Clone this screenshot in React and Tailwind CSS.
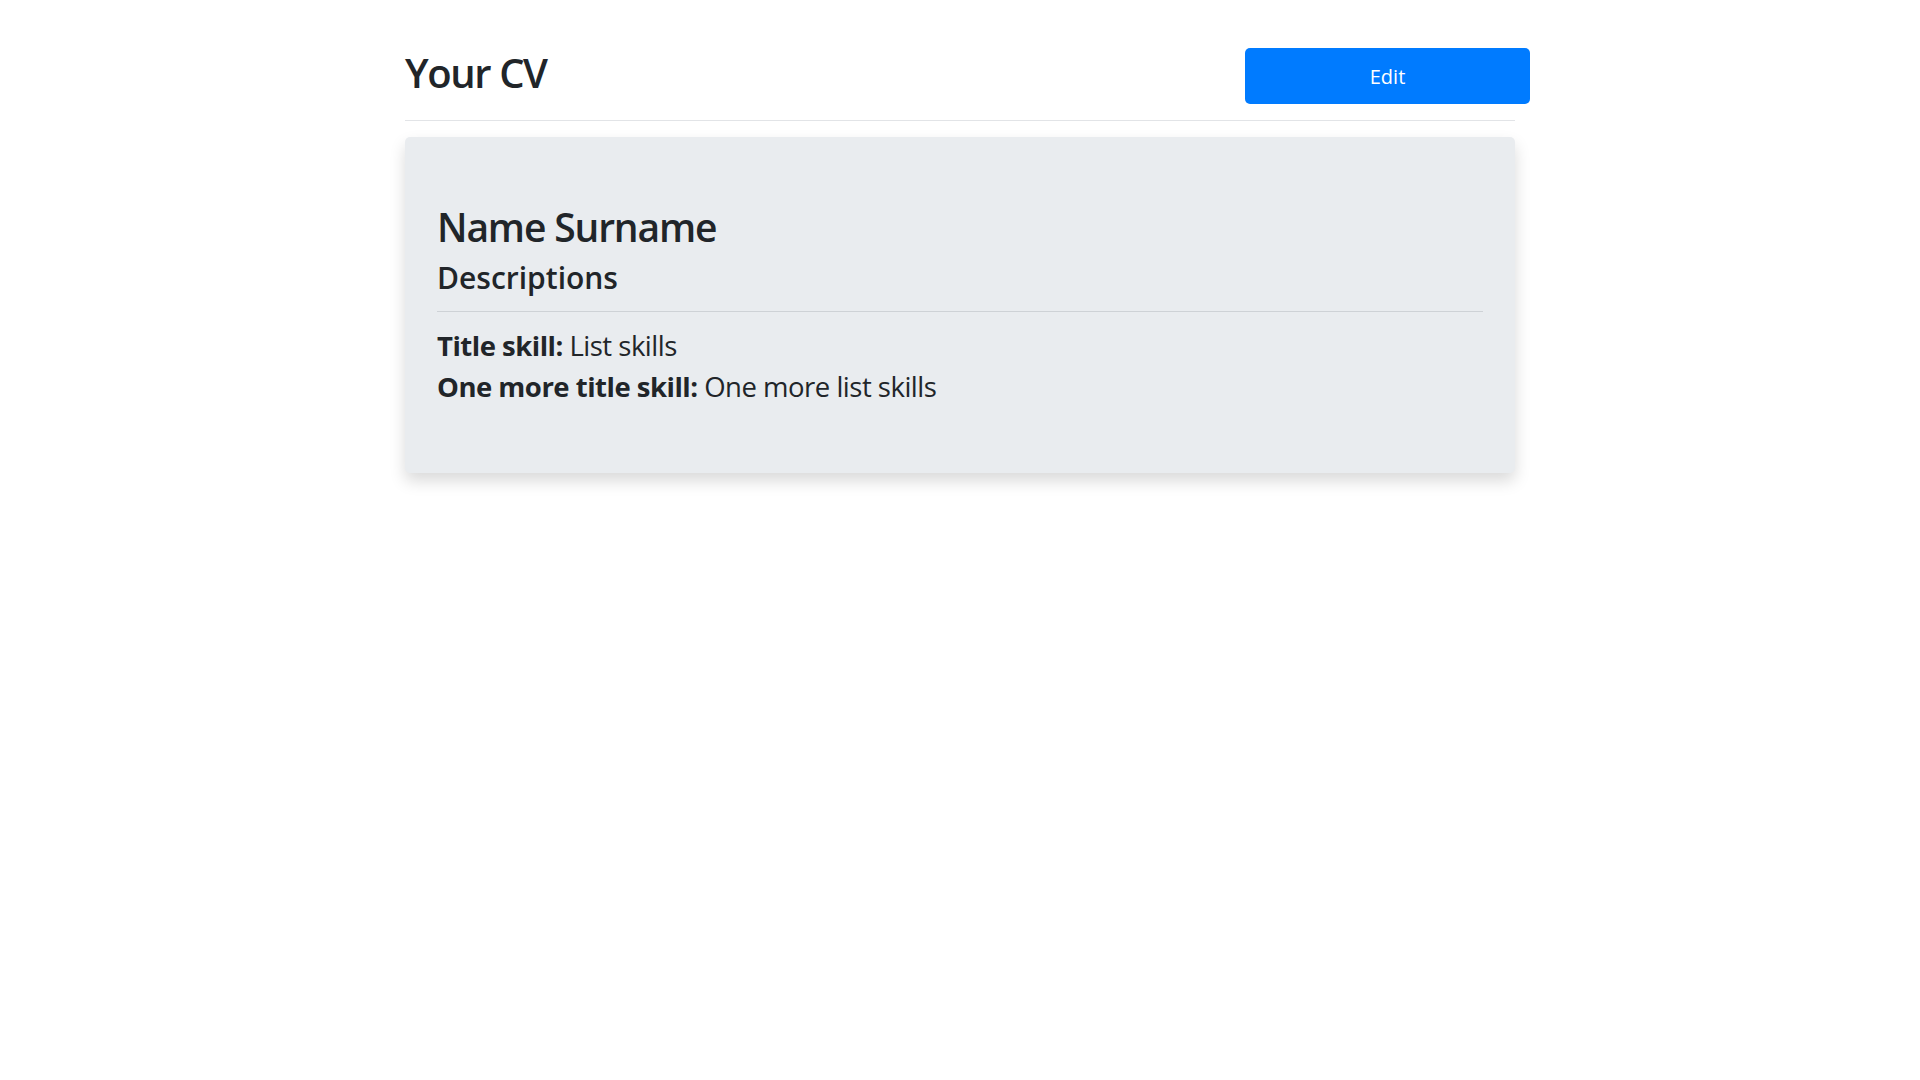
import React from "react";

const skills = [
  { title: "Title skill:", text: "List skills" },
  { title: "One more title skill:", text: "One more list skills" },
];

const App = () => {
  return (
    <div className="min-h-screen bg-white text-[#212529] font-['Open_Sans',sans-serif]">
      <div className="mx-auto w-[1110px] pt-[48px]">
        <div className="flex items-start justify-between h-[56px]">
          <h1 className="mt-[1px] text-[40px] leading-[48px] font-semibold tracking-[-1.4px]">Your CV</h1>
          <button className="-mr-[15px] w-[285px] h-[56px] pt-[2px] rounded-[5px] bg-[#007bff] text-white text-[20px] leading-none">
            Edit
          </button>
        </div>
        <div className="mt-[16px] border-t border-[#e2e4e7]" />

        <div className="mt-[16px] rounded-[5px] bg-[#e9ecef] px-[32px] pt-[66px] pb-[66px] shadow-[0_8px_16px_rgba(0,0,0,0.15)]">
          <h1 className="text-[39px] leading-[48px] font-semibold tracking-[-1.15px]">Name Surname</h1>
          <h3 className="mt-[9px] text-[30px] leading-[36px] font-semibold tracking-[0px]">Descriptions</h3>
          <div className="mt-[15px] border-t border-[#ced2d6]" />
          <div className="mt-[13px]">
            {skills.map((s) => (
              <p key={s.title} className="text-[27.5px] leading-[41px] font-normal tracking-[-0.5px]">
                <span className="font-bold">{s.title}</span> {s.text}
              </p>
            ))}
          </div>
        </div>
      </div>
    </div>
  );
};

export default App;
